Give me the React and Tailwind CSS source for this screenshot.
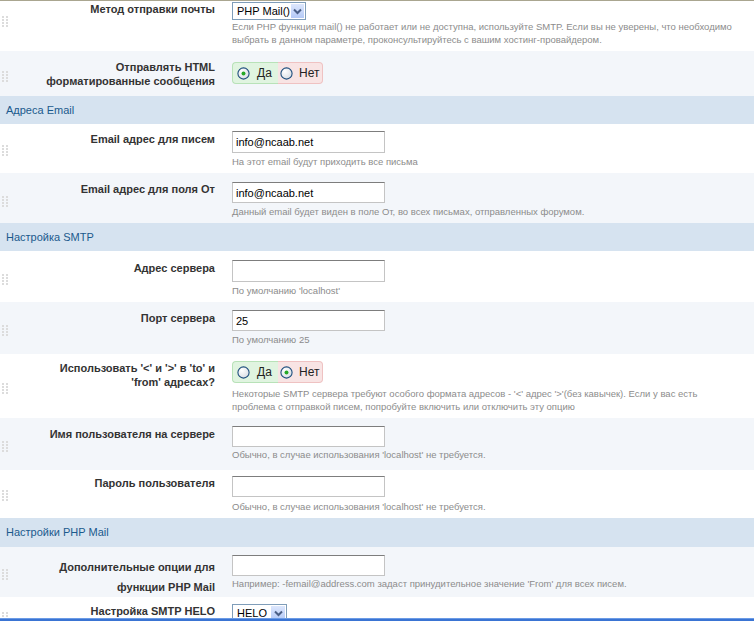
import React from 'react';

const Grip = () => (
    <svg width="6" height="11" viewBox="0 0 6 11">
        {[0, 3, 6, 9].map(y =>
            [0, 4].map(x => <rect key={`${x}-${y}`} x={x} y={y} width="2" height="2" fill="#dcdcdc" />)
        )}
    </svg>
);

const Radio = ({ checked }) => (
    <svg width="13" height="13" viewBox="0 0 13 13">
        <defs>
            <radialGradient id="rg" cx="0.35" cy="0.3" r="0.8">
                <stop offset="0" stopColor="#ffffff" />
                <stop offset="1" stopColor="#d6dbe2" />
            </radialGradient>
        </defs>
        <circle cx="6.5" cy="6.5" r="5.6" fill="url(#rg)" stroke="#1f4f7e" strokeWidth="1.1" />
        {checked && <circle cx="6.5" cy="6.5" r="2" fill="#26a826" />}
    </svg>
);

const RadioGroup = ({ yes }) => (
    <div className="inline-flex h-[22px] text-[12px] text-[#222]">
        <span className="flex items-center w-[46px] bg-[#e0f4e0] border border-r-0 border-[#b8e2b8] rounded-l-[4px] pl-[4px]">
            <Radio checked={yes} />
            <span className="ml-[7px]">Да</span>
        </span>
        <span className="flex items-center w-[45px] bg-[#f8e4e4] border border-l-0 border-[#efc2c2] rounded-r-[4px] pl-[2px]">
            <Radio checked={!yes} />
            <span className="ml-[6px]">Нет</span>
        </span>
    </div>
);

const Select = ({ value, width }) => (
    <div className={`flex h-[18px] border border-[#7f9db9] bg-white ${width}`}>
        <span className="flex-1 pl-[4px] text-[11px] leading-[16px] text-black whitespace-nowrap">{value}</span>
        <span className="w-[16px] flex items-center justify-center border border-white bg-gradient-to-b from-[#dde7fd] to-[#b4c9f6]">
            <svg width="9" height="7" viewBox="0 0 9 7">
                <path d="M1 1.5 L4.5 5 L8 1.5" fill="none" stroke="#4b5f86" strokeWidth="2" />
            </svg>
        </span>
    </div>
);

const TextInput = ({ value = '', height = 'h-[22px]' }) => (
    <input
        readOnly
        defaultValue={value}
        className={`block w-[153px] ${height} border border-[#c4c4c4] border-t-[#7d7d7d] bg-white px-[3px] text-[11px] text-black outline-none`}
    />
);

const Help = ({ lines, mt }) => (
    <div className={`${mt} text-[9.5px] leading-[13px] text-[#8c8c8c]`}>
        {lines.map((l, i) => <div key={i} className="whitespace-nowrap">{l}</div>)}
    </div>
);

const Row = ({ bg, h, pt, label, labelClass, gripClass = 'self-center mb-[3px]', children }) => (
    <div className={`flex ${bg} ${h} ${pt} overflow-hidden`}>
        <div className={`w-[12px] pl-[2px] ${gripClass}`}><Grip /></div>
        <div className={`w-[220px] pr-[17px] text-right font-bold text-[11px] text-[#333] ${labelClass}`}>
            {label.map((l, i) => <div key={i}>{l}</div>)}
        </div>
        <div>{children}</div>
    </div>
);

const Section = ({ title, h }) => (
    <div className={`flex items-center ${h} bg-[#d6e3f0] pl-[6px] text-[11px] text-[#1b5a8d]`}>{title}</div>
);

export default function App() {
    return (
        <div className="h-[621px] overflow-hidden flex flex-col bg-white font-['Liberation_Sans',Arial,sans-serif]">
            <div className="flex-1 overflow-hidden border-t border-[#aaa690]">
                <Row bg="bg-white" h="h-[50px]" pt="pt-[1px]" label={['Метод отправки почты']} labelClass="leading-[14px]" gripClass="self-start mt-[14px]">
                    <Select value="PHP Mail()" width="w-[74px]" />
                    <Help mt="mt-0" lines={[
                        'Если PHP функция mail() не работает или не доступна, используйте SMTP. Если вы не уверены, что необходимо',
                        'выбрать в данном параметре, проконсультируйтесь с вашим хостинг-провайдером.'
                    ]} />
                </Row>

                <Row bg="bg-[#f3f6fa]" h="h-[45px]" pt="pt-[11px]" label={['Отправлять HTML', 'форматированные сообщения']} labelClass="leading-[14px] -mt-[2px]" gripClass="self-center mb-[5px]">
                    <RadioGroup yes />
                </Row>

                <Section title="Адреса Email" h="h-[28px]" />

                <Row bg="bg-white" h="h-[49px]" pt="pt-[7px]" label={['Email адрес для писем']} labelClass="leading-[14px] mt-[1px]">
                    <TextInput value="info@ncaab.net" />
                    <Help mt="mt-[2px]" lines={['На этот email будут приходить все письма']} />
                </Row>

                <Row bg="bg-[#f3f6fa]" h="h-[50px]" pt="pt-[9px]" label={['Email адрес для поля От']} labelClass="leading-[14px]">
                    <TextInput value="info@ncaab.net" height="h-[21px]" />
                    <Help mt="mt-[2px]" lines={['Данный email будет виден в поле От, во всех письмах, отправленных форумом.']} />
                </Row>

                <Section title="Настройка SMTP" h="h-[28px]" />

                <Row bg="bg-white" h="h-[51px]" pt="pt-[9px]" label={['Адрес сервера']} labelClass="leading-[14px] mt-[1px]">
                    <TextInput />
                    <Help mt="mt-[2px]" lines={["По умолчанию 'localhost'"]} />
                </Row>

                <Row bg="bg-[#f3f6fa]" h="h-[52px]" pt="pt-[8px]" label={['Порт сервера']} labelClass="leading-[14px] mt-[1px]">
                    <TextInput value="25" height="h-[21px]" />
                    <Help mt="mt-[2px]" lines={['По умолчанию 25']} />
                </Row>

                <Row bg="bg-white" h="h-[64px]" pt="pt-[7px]" label={["Использовать '<' и '>' в 'to' и", "'from' адресах?"]} labelClass="leading-[14px]">
                    <RadioGroup yes={false} />
                    <Help mt="mt-[1px]" lines={[
                        "Некоторые SMTP сервера требуют особого формата адресов - '<' адрес '>'(без кавычек). Если у вас есть",
                        'проблема с отправкой писем, попробуйте включить или отключить эту опцию'
                    ]} />
                </Row>

                <Row bg="bg-[#f3f6fa]" h="h-[52px]" pt="pt-[8px]" label={['Имя пользователя на сервере']} labelClass="leading-[14px] mt-[1px]">
                    <TextInput height="h-[21px]" />
                    <Help mt="mt-[1px]" lines={["Обычно, в случае использования 'localhost' не требуется."]} />
                </Row>

                <Row bg="bg-white" h="h-[48px]" pt="pt-[6px]" label={['Пароль пользователя']} labelClass="leading-[14px]">
                    <TextInput height="h-[21px]" />
                    <Help mt="mt-[3px]" lines={["Обычно, в случае использования 'localhost' не требуется."]} />
                </Row>

                <Section title="Настройки PHP Mail" h="h-[29px]" />

                <Row bg="bg-[#f3f6fa]" h="h-[50px]" pt="pt-[8px]" label={['Дополнительные опции для', 'функции PHP Mail']} labelClass="leading-[20px] mt-[2px]">
                    <TextInput height="h-[21px]" />
                    <Help mt="mt-[1px]" lines={["Например: -femail@address.com задаст принудительное значение 'From' для всех писем."]} />
                </Row>

                <Row bg="bg-white" h="h-[40px]" pt="pt-[7px]" label={['Настройка SMTP HELO']} labelClass="leading-[14px]" gripClass="self-start mt-[8px]">
                    <Select value="HELO" width="w-[55px]" />
                </Row>
            </div>
            <div className="h-[3px] bg-[#3a74d3] border-t border-[#6b9be6]" />
        </div>
    );
}
